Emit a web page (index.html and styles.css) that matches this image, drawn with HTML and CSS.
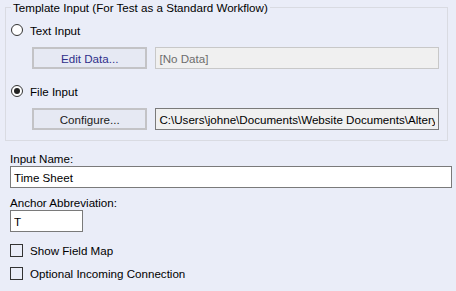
FILE: index.html
```html
<!doctype html>
<html lang="en">
  <head>
    <meta charset="UTF-8" />
    <meta name="viewport" content="width=device-width, initial-scale=1.0" />
    <title>Macro Input</title>
    <link rel="stylesheet" href="styles.css">
  </head>
  <body>
    <div class="panel">
      <fieldset class="group">
        <legend>Template Input (For Test as a Standard Workflow)</legend>
        <label class="option first">
          <input type="radio" name="source" />
          <span>Text Input</span>
        </label>
        <div class="source-row">
          <button type="button" class="btn btn-edit">Edit Data...</button>
          <input type="text" class="field field-disabled" value="[No Data]" disabled />
        </div>
        <label class="option">
          <input type="radio" name="source" checked />
          <span>File Input</span>
        </label>
        <div class="source-row">
          <button type="button" class="btn">Configure...</button>
          <input type="text" class="field field-readonly" value="C:\Users\johne\Documents\Website Documents\Alteryx\Time Sheet.xlsx" readonly />
        </div>
      </fieldset>

      <div class="form-group name-group">
        <label for="inputName">Input Name:</label>
        <input type="text" id="inputName" class="field field-wide" value="Time Sheet" />
      </div>

      <div class="form-group">
        <label for="anchor">Anchor Abbreviation:</label>
        <input type="text" id="anchor" class="field field-short" value="T" />
      </div>

      <div class="checks">
        <label class="check">
          <input type="checkbox" />
          <span>Show Field Map</span>
        </label>
        <label class="check">
          <input type="checkbox" />
          <span>Optional Incoming Connection</span>
        </label>
      </div>
    </div>
  </body>
</html>
```

FILE: styles.css
```css
body {
  margin: 0;
  padding: 0;
  font-family: "Liberation Sans", Arial, sans-serif;
  font-size: 11.6px;
  color: #000;
  background-color: #eaedf8;
  width: 456px;
  height: 291px;
  overflow: hidden;
}

.panel {
  display: flex;
  flex-direction: column;
}

.group {
  margin: 0 8px 0 5px;
  padding: 0 8px 10px 5px;
  border: 1px solid #d9dbe2;
  min-width: 0;
}

.group legend {
  padding: 0 2px;
  line-height: 15px;
}

.option {
  display: flex;
  align-items: center;
  height: 20px;
  margin-top: 12px;
}

.option.first {
  margin-top: 5px;
}

.option input {
  appearance: none;
  margin: 0 7px 0 0;
  width: 12px;
  height: 12px;
  border: 1px solid #333;
  border-radius: 50%;
  background-color: #fff;
  display: grid;
  place-content: center;
}

.option input:checked::before {
  content: "";
  width: 6px;
  height: 6px;
  border-radius: 50%;
  background-color: #222;
}

.source-row {
  display: flex;
  gap: 8px;
  margin: 7px 0 0 21px;
}

.source-row + .option {
  margin-top: 12px;
}

.btn {
  width: 116px;
  height: 22px;
  padding: 0;
  font-family: inherit;
  font-size: 11.6px;
  color: #1a1a1a;
  background-color: #e6e9f3;
  border: 2px solid #c3c3c6;
  border-radius: 0;
}

.btn-edit {
  color: #2f2f8a;
}

.field {
  box-sizing: border-box;
  height: 22px;
  padding: 0 3px;
  font-family: inherit;
  font-size: 11.6px;
  color: #000;
  background-color: #fff;
  border: 1px solid #7a7a7a;
  border-radius: 0;
  outline: none;
}

.source-row .field {
  width: 285px;
}

.field-disabled {
  color: #6d6d6d;
  background-color: #f0f0f0;
  border-color: #c8c8c8;
}

.field-readonly {
  background-color: #f0f0f0;
}

.form-group {
  display: flex;
  flex-direction: column;
  align-items: flex-start;
  margin: 7px 0 0 10px;
}

.name-group {
  margin-top: 10px;
}

.form-group label {
  line-height: 15px;
}

.field-wide {
  width: 442px;
}

.field-short {
  width: 73px;
}

.checks {
  display: flex;
  flex-direction: column;
  gap: 3px;
  margin: 8px 0 0 10px;
}

.check {
  display: flex;
  align-items: center;
  height: 20px;
}

.check input {
  appearance: none;
  margin: 0 7px 0 0;
  width: 13px;
  height: 13px;
  border: 1px solid #333;
  background-color: transparent;
}
```
